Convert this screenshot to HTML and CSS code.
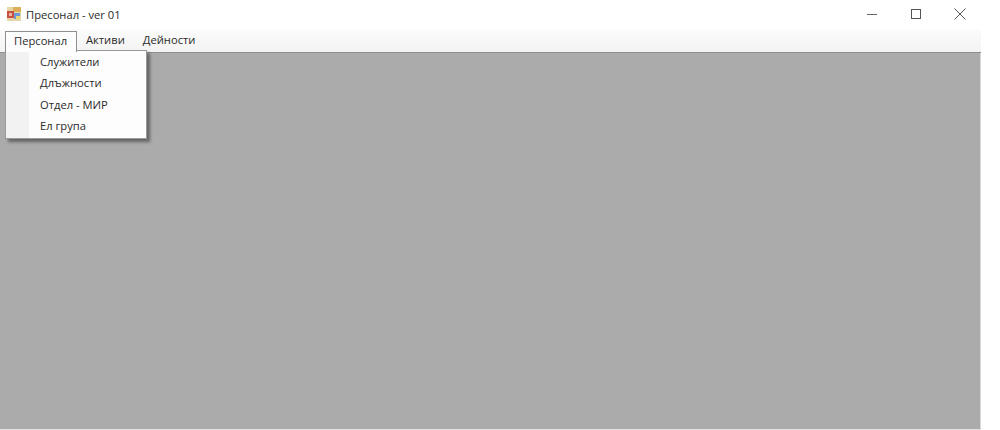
FILE: index.html
```html
<!DOCTYPE html>
<html lang="bg">
<head>
<meta charset="utf-8">
<title>Пресонал - ver 01</title>
<link rel="stylesheet" href="styles.css">
</head>
<body>
<div class="window">
  <header class="titlebar">
    <svg class="app-icon" width="14" height="14" viewBox="0 0 14 14" aria-hidden="true">
      <rect x="0" y="0" width="14" height="14" fill="#e6d6a6"/>
      <rect x="6" y="0" width="8" height="5" fill="#dcae5a"/>
      <rect x="0" y="4" width="7" height="7" fill="#c9503f"/>
      <rect x="2" y="6" width="3" height="3" fill="#e8b9a6"/>
      <rect x="7" y="6" width="6" height="6" fill="#6d9ad6"/>
      <rect x="9" y="9" width="4" height="3" fill="#ecd573"/>
    </svg>
    <span class="title">Пресонал - ver 01</span>
    <div class="controls">
      <button class="ctl"><svg width="12" height="12" viewBox="0 0 12 12"><path d="M1 6.5h10" stroke="#666" stroke-width="1" fill="none"/></svg></button>
      <button class="ctl"><svg width="12" height="12" viewBox="0 0 12 12"><rect x="1.5" y="1.5" width="9" height="9" stroke="#555" stroke-width="1" fill="none"/></svg></button>
      <button class="ctl"><svg width="12" height="12" viewBox="0 0 12 12"><path d="M.5.5l11 11M11.5.5l-11 11" stroke="#555" stroke-width="1" fill="none"/></svg></button>
    </div>
  </header>
  <nav class="menubar">
    <div class="menu-item active">Персонал</div>
    <div class="menu-item">Активи</div>
    <div class="menu-item">Дейности</div>
  </nav>
  <main class="workspace"></main>
  <div class="dropdown">
    <div class="drop-item">Служители</div>
    <div class="drop-item">Длъжности</div>
    <div class="drop-item">Отдел - МИР</div>
    <div class="drop-item">Ел група</div>
  </div>
</div>
</body>
</html>
```
FILE: styles.css
```css
* { box-sizing: border-box; }
html, body { margin: 0; height: 100%; background: #fff; }
body { font-family: "Open Sans", "Noto Sans", sans-serif; font-size: 11.2px; color: #2a2a2a; }
.window { position: relative; width: 981px; height: 430px; display: flex; flex-direction: column; background: #fff; }
.titlebar { height: 29px; display: flex; align-items: center; padding: 0 0 1px 7px; background: #fff; }
.app-icon { flex: none; }
.title { margin-left: 5px; }
.controls { margin-left: auto; margin-right: -1px; display: flex; }
.ctl { width: 44px; height: 28px; padding: 0; border: 0; background: none; display: flex; align-items: center; justify-content: center; }
.menubar { height: 24px; display: flex; padding: 2px 0 0 5px; background: linear-gradient(#fcfcfc, #f3f3f3); border-bottom: 1px solid #8f8f8f; }
.menu-item { height: 21px; line-height: 18px; padding: 0 9px; }
.menu-item.active { width: 72px; background: #fdfdfd; border: 1px solid #8f8f8f; border-bottom: 0; position: relative; z-index: 2; padding: 0 8px; }
.menu-item + .menu-item { padding: 0 9px 0 9px; }
.workspace { flex: 1; background: #ababab; border-right: 1px solid #d8d8d8; border-bottom: 1px solid #e0e0e0; }
.dropdown { position: absolute; left: 5px; top: 50px; width: 142px; height: 89px; padding: 1px 1px 0 23px; background: linear-gradient(to right, #f2f2f2 23px, #fdfdfd 23px); border: 1px solid #9a9a9a; box-shadow: 3px 3px 3px rgba(0,0,0,.42); }
.drop-item { height: 21.4px; line-height: 20px; padding-left: 11px; }
```
